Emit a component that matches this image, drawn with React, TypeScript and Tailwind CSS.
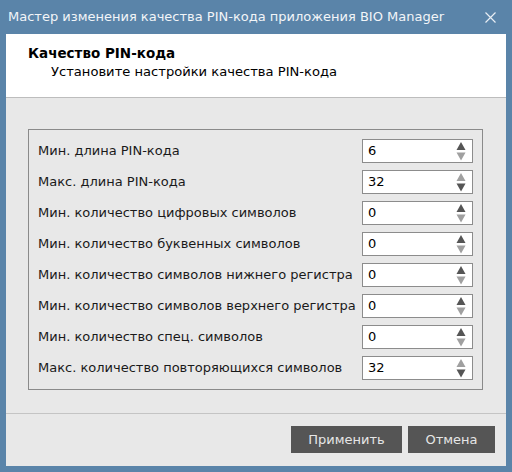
import React from "react";

const rows: { label: string; value: string; up: boolean; down: boolean }[] = [
  { label: "Мин. длина PIN-кода", value: "6", up: true, down: false },
  { label: "Макс. длина PIN-кода", value: "32", up: false, down: true },
  { label: "Мин. количество цифровых символов", value: "0", up: true, down: false },
  { label: "Мин. количество буквенных символов", value: "0", up: true, down: false },
  { label: "Мин. количество символов нижнего регистра", value: "0", up: true, down: false },
  { label: "Мин. количество символов верхнего регистра", value: "0", up: true, down: false },
  { label: "Мин. количество спец. символов", value: "0", up: true, down: false },
  { label: "Макс. количество повторяющихся символов", value: "32", up: false, down: true },
];

function Arrows({ up, down }: { up: boolean; down: boolean }) {
  return (
    <svg width="10" height="19" viewBox="0 0 10 19" className="shrink-0">
      <polygon points="5,0 9.5,8 0.5,8" fill={up ? "#555555" : "#a0a0a0"} />
      <polygon points="0.5,10.5 9.5,10.5 5,18.5" fill={down ? "#555555" : "#a0a0a0"} />
    </svg>
  );
}

export default function App() {
  return (
    <div
      className="w-[512px] h-[472px] bg-[#5a84a9] flex flex-col overflow-hidden"
      style={{ fontFamily: '"DejaVu Sans", sans-serif' }}
    >
      <div className="h-[34px] shrink-0 flex items-center justify-between pl-[8px] pr-[16px]">
        <span className="text-[13px] text-[#f2f5f8]">Мастер изменения качества PIN-кода приложения BIO Manager</span>
        <svg width="11" height="11" viewBox="0 0 11 11">
          <path d="M0.5 0.5 L10.5 10.5 M10.5 0.5 L0.5 10.5" stroke="#e8eef4" strokeWidth="1.2" />
        </svg>
      </div>
      <div className="mx-[6px] mb-[6px] flex-1 flex flex-col bg-[#e8e8e8]">
        <div className="h-[64px] shrink-0 bg-white border-b border-[#bdbdbd] flex flex-col pt-[10px]">
          <div className="pl-[22px] text-[13.5px] font-bold text-black leading-[18px]">Качество PIN-кода</div>
          <div className="pl-[45px] text-[13.1px] text-black leading-[18px] mt-[1px]">Установите настройки качества PIN-кода</div>
        </div>
        <div className="flex-1 flex flex-col">
          <div className="mt-[31px] ml-[22px] mr-[23px] h-[261px] border border-[#8a8a8a] px-[9px] py-[9px] flex flex-col gap-[7px]">
            {rows.map((r) => (
              <div key={r.label} className="h-[24px] flex items-center justify-between">
                <span className="text-[13px] text-[#1a1a1a]">{r.label}</span>
                <div className="w-[111px] h-[24px] bg-white border border-[#8c8c8c] flex items-center justify-between pl-[5px] pr-[6px]">
                  <span className="text-[13px] text-black">{r.value}</span>
                  <Arrows up={r.up} down={r.down} />
                </div>
              </div>
            ))}
          </div>
          <div className="mt-[23px] border-t border-[#c4c4c4] flex-1 flex justify-end items-start pt-[12px] pr-[11px] gap-[6px]">
            <button className="w-[111px] h-[27px] bg-[#555555] text-[#e6e6e6] text-[13px]">Применить</button>
            <button className="w-[87px] h-[27px] bg-[#555555] text-[#e6e6e6] text-[13px]">Отмена</button>
          </div>
        </div>
      </div>
    </div>
  );
}
